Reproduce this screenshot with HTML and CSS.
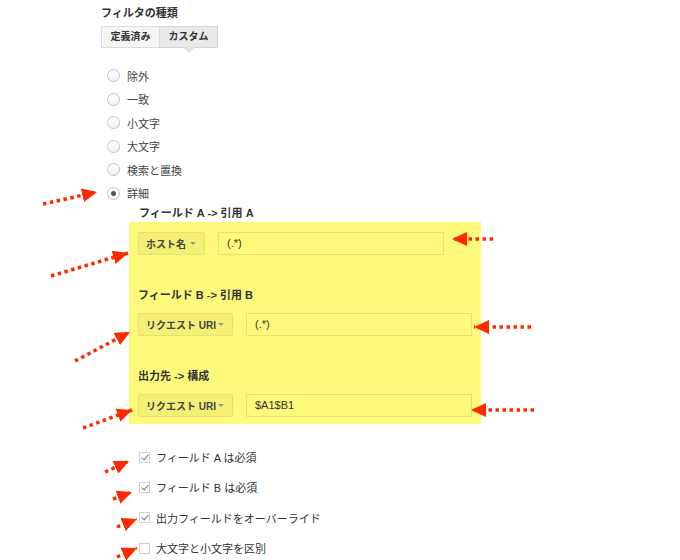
FILE: index.html
```html
<!DOCTYPE html>
<html lang="ja">
<head>
    <meta charset="UTF-8">
    <title>フィルタの種類</title>
    <link rel="stylesheet" href="styles.css">
</head>
<body>
    <div class="page">
        <h2 class="title">フィルタの種類</h2>
        <div class="tabs">
            <div class="tab">定義済み</div>
            <div class="tab active">カスタム</div>
        </div>

        <ul class="radios">
            <li><span class="radio"></span>除外</li>
            <li><span class="radio"></span>一致</li>
            <li><span class="radio"></span>小文字</li>
            <li><span class="radio"></span>大文字</li>
            <li><span class="radio"></span>検索と置換</li>
            <li><span class="radio checked"></span>詳細</li>
        </ul>

        <div class="details">
            <div class="label first">フィールド A -&gt; 引用 A</div>
            <div class="highlight">
                <div class="row">
                    <div class="select w-short">ホスト名<span class="caret"></span></div>
                    <div class="field">(.*)</div>
                </div>
                <div class="label">フィールド B -&gt; 引用 B</div>
                <div class="row">
                    <div class="select w-long">リクエスト URI<span class="caret"></span></div>
                    <div class="field">(.*)</div>
                </div>
                <div class="label">出力先 -&gt; 構成</div>
                <div class="row">
                    <div class="select w-long">リクエスト URI<span class="caret"></span></div>
                    <div class="field">$A1$B1</div>
                </div>
            </div>

            <ul class="checks">
                <li><span class="check on"></span>フィールド A は必須</li>
                <li><span class="check on"></span>フィールド B は必須</li>
                <li><span class="check on"></span>出力フィールドをオーバーライド</li>
                <li><span class="check"></span>大文字と小文字を区別</li>
            </ul>
        </div>
    </div>

    <!-- annotation arrows drawn over the screenshot -->
    <svg class="arrows" width="680" height="560" viewBox="0 0 680 560">
        <defs>
            <marker id="head" markerUnits="userSpaceOnUse" markerWidth="16" markerHeight="14" refX="15" refY="7" orient="auto">
                <path d="M0,0 L15,7 L0,14 z" fill="#ff2a00"/>
            </marker>
        </defs>
        <g stroke="#ff2a00" stroke-width="3.5" stroke-dasharray="3.5 3.5" fill="none" marker-end="url(#head)">
            <line x1="43" y1="204" x2="97" y2="192"/>
            <line x1="51" y1="276" x2="128" y2="253"/>
            <line x1="75" y1="361" x2="130" y2="332"/>
            <line x1="83" y1="428" x2="132" y2="410"/>
            <line x1="493" y1="239" x2="452" y2="239"/>
            <line x1="531" y1="327" x2="474" y2="327"/>
            <line x1="534" y1="410" x2="471" y2="410"/>
            <line x1="105" y1="472" x2="129" y2="461"/>
            <line x1="113" y1="499" x2="132" y2="492"/>
            <line x1="117" y1="527" x2="137" y2="519"/>
            <line x1="117" y1="557" x2="137" y2="548"/>
        </g>
    </svg>
</body>
</html>
```

FILE: styles.css
```css
body { margin: 0; font-family: "Liberation Sans", "Noto Sans CJK JP", sans-serif; font-size: 11px; color: #333; background: #fff; }
.page { padding: 6px 0 0 101px; }

.title { margin: 0; font-size: 11px; font-weight: bold; line-height: 14px; color: #333; }

.tabs { display: flex; margin-top: 6px; }
.tab { position: relative; width: 57px; height: 20px; line-height: 20px; text-align: center; font-size: 10px; font-weight: bold; color: #333; background: #f5f5f5; border: 1px solid #dcdcdc; }
.tab + .tab { border-left: none; }
.tab.active { background: #e9e9e9; border-color: #d4d4d4; }
.tab.active::after { content: ""; position: absolute; left: 50%; bottom: -6px; margin-left: -6px; border-left: 6px solid transparent; border-right: 6px solid transparent; border-top: 6px solid #e0e0e0; }

.radios { list-style: none; margin: 16px 0 0; padding: 0 0 0 6px; }
.radios li { display: flex; align-items: center; height: 23.5px; color: #444; }
.radio { width: 11px; height: 11px; margin-right: 7px; border: 1px solid #c4c4c4; border-radius: 50%; background: linear-gradient(#fff, #f2f2f2); display: flex; align-items: center; justify-content: center; }
.radio.checked::after { content: ""; width: 5px; height: 5px; border-radius: 50%; background: #555; }

.details { margin: 1px 0 0 28px; }
.label { font-weight: bold; line-height: 14px; margin: 33px 0 11px; }
.label.first { margin: 0 0 2px 10px; }

.highlight { width: 343px; padding: 10px 0 7px 9px; background: #fef97a; }
.row { display: flex; gap: 13px; height: 23px; }
.select { display: flex; align-items: center; justify-content: space-between; box-sizing: border-box; padding: 0 8px 0 7px; font-size: 10px; font-weight: bold; color: #444; background: rgba(0, 0, 0, 0.04); border: 1px solid rgba(0, 0, 0, 0.06); border-radius: 2px; }
.w-short { width: 67px; }
.w-long { width: 95px; }
.caret { width: 0; height: 0; border-left: 3px solid transparent; border-right: 3px solid transparent; border-top: 3px solid #999; }
.field { box-sizing: border-box; width: 226px; padding-left: 8px; line-height: 21px; border: 1px solid rgba(0, 0, 0, 0.09); color: #333; }

.checks { list-style: none; margin: 18px 0 0; padding: 0 0 0 10px; }
.checks li { display: flex; align-items: center; height: 30.3px; color: #333; }
.check { position: relative; width: 9px; height: 9px; margin-right: 6px; border: 1px solid #d0d0d0; background: #fff; }
.check.on::after { content: ""; position: absolute; left: 3px; top: 0; width: 3px; height: 6px; border: solid #777; border-width: 0 1.5px 1.5px 0; transform: rotate(40deg); }

.arrows { position: absolute; left: 0; top: 0; pointer-events: none; }
```
